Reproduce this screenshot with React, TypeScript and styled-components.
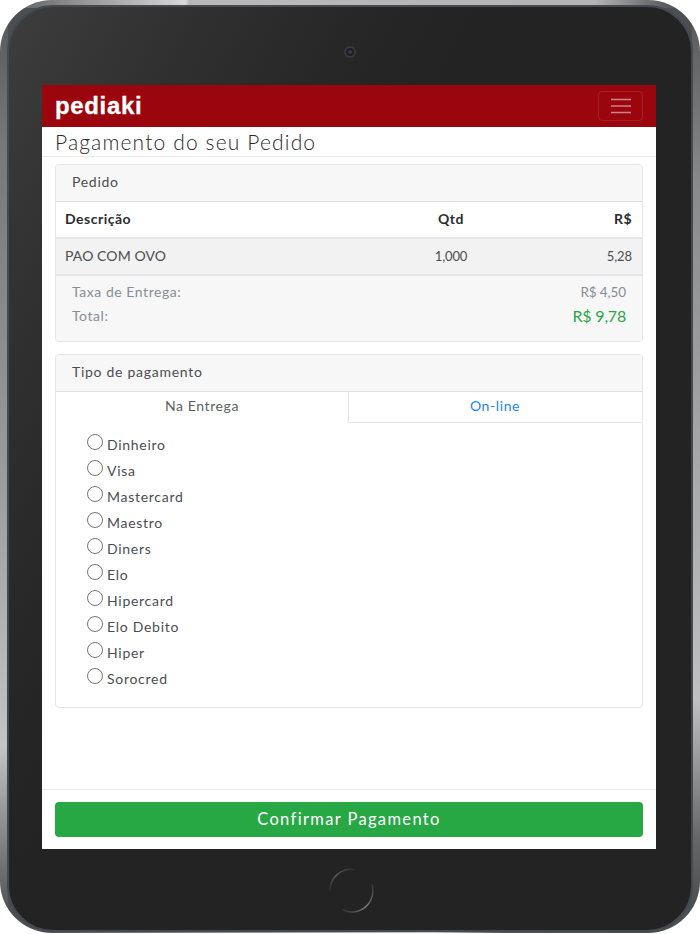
import React from "react";
import styled, { createGlobalStyle } from "styled-components";

const Global = createGlobalStyle`
  html, body { margin: 0; padding: 0; background: #fff; }
  * { box-sizing: border-box; }
  body { font-family: "Lato", "Open Sans", sans-serif; color: #212529; }
`;

const Device = styled.div`
  width: 700px;
  height: 933px;
  padding: 5px 7px 1px 7px;
  border-radius: 52px;
  background:
    linear-gradient(90deg, #555 0%, #8c8c8c 10%, #d8d8d8 26.5%, #b8b8b8 27%, #b4b4b4 85%, #5a5c5e 95%, #454749 100%) top / 100% 8px no-repeat,
    linear-gradient(90deg, #444 0%, #6a6a6a 15%, #c8c8c8 62%, #555 72%, #4a4c4f 100%) bottom / 100% 10px no-repeat,
    linear-gradient(180deg, #555 0%, #777 15%, #9a9a9a 50%, #c4c4c4 80%, #777 92%, #444 100%) left / 8px 100% no-repeat,
    linear-gradient(180deg, #555 0%, #8a8a8a 20%, #a8a8a8 50%, #c0c0c0 75%, #666 90%, #444 100%) right / 8px 100% no-repeat,
    #4c4f52;
`;

const Bezel = styled.div`
  height: 100%;
  display: grid;
  grid-template-rows: 78px 764px 1fr;
  padding: 0 35px 0 33px;
  border: 2px solid #454a52;
  border-radius: 46px;
  background: linear-gradient(118deg, #3d3d3d 0%, #303030 16%, #272727 30%, #232323 40%, #232323 100%);
`;

const TopBezel = styled.div`
  display: flex;
  justify-content: center;
  padding-top: 39px;
  padding-left: 2px;
`;

const Camera = styled.span`
  width: 12px;
  height: 12px;
  border-radius: 50%;
  background: #1f1f22;
  border: 2px solid #3a3a3e;
  display: flex;
  align-items: center;
  justify-content: center;
  &::after {
    content: "";
    width: 4px;
    height: 4px;
    border-radius: 50%;
    background: #3a3450;
  }
`;

const BottomBezel = styled.div`
  display: flex;
  justify-content: center;
  padding-top: 18px;
  padding-left: 3px;
`;

const HomeIcon = styled.svg`
  width: 46px;
  height: 46px;
  display: block;
`;

const Screen = styled.main`
  background: #fff;
  display: flex;
  flex-direction: column;
  min-height: 0;
`;

const Navbar = styled.nav`
  height: 42px;
  flex: none;
  background: #9b050e;
  display: flex;
  align-items: center;
  justify-content: space-between;
  padding: 0 13px;
`;

const Brand = styled.span`
  font-family: "Liberation Sans", Arial, sans-serif;
  font-weight: 700;
  font-size: 24px;
  letter-spacing: 0.65px;
  color: #fff;
  -webkit-text-stroke: 0.3px #fff;
`;

const Toggler = styled.button`
  width: 45px;
  height: 30px;
  padding: 0;
  background: transparent;
  border: 1px solid rgba(255, 255, 255, 0.1);
  border-radius: 4px;
  display: flex;
  align-items: center;
  justify-content: center;
`;

const TitleRow = styled.header`
  height: 30px;
  flex: none;
  border-bottom: 1px solid #e9e9e9;
  padding: 0 13px 1px;
  display: flex;
  align-items: center;
`;

const Title = styled.h1`
  margin: 0;
  font-size: 21px;
  line-height: 29px;
  font-weight: 300;
  letter-spacing: 1.15px;
  color: #26292d;
`;

const Content = styled.div`
  flex: 1;
  padding: 7px 13px 0;
  display: flex;
  flex-direction: column;
  gap: 12px;
  min-height: 0;
`;

const Card = styled.section<{ $h: number }>`
  height: ${(p) => p.$h}px;
  border: 1px solid #e5e5e5;
  border-radius: 4px;
  display: flex;
  flex-direction: column;
  overflow: hidden;
`;

const CardHeader = styled.div`
  height: 37px;
  flex: none;
  padding: 0 16px 4px;
  background: #f7f7f7;
  border-bottom: 1px solid #dfdfdf;
  display: flex;
  align-items: center;
  font-size: 14px;
  letter-spacing: 0.72px;
  color: #4a4e52;
`;

const TableRow = styled.div<{ $shaded?: boolean; $head?: boolean }>`
  height: 37px;
  flex: none;
  display: grid;
  grid-template-columns: 1fr 100px 131px;
  align-items: center;
  padding: 0 10px 2px 9px;
  background: ${(p) => (p.$shaded ? "#f2f2f2" : "#fff")};
  border-bottom: 2px solid #e4e6e9;
  font-size: 14px;
  font-weight: ${(p) => (p.$head ? 700 : 400)};
  color: ${(p) => (p.$head ? "#2a2d30" : "#4a4e52")};
  letter-spacing: ${(p) => (p.$head ? "0.5px" : "0.1px")};
`;

const QtyCell = styled.span`
  text-align: center;
`;

const PriceCell = styled.span`
  text-align: right;
`;

const Figure = styled.span`
  font-size: 13px;
  letter-spacing: -0.1px;
`;

const Totals = styled.div`
  flex: 1;
  background: #f7f7f7;
  padding: 5px 16px 0;
`;

const TotalRow = styled.div`
  height: 24px;
  display: flex;
  align-items: center;
  justify-content: space-between;
  padding-bottom: 3px;
  font-size: 14px;
  letter-spacing: 0.55px;
  color: #868e96;
`;

const Price = styled.span`
  font-size: 13.5px;
  letter-spacing: -0.1px;
`;

const GrandTotal = styled.span`
  font-size: 16px;
  color: #28a745;
  letter-spacing: -0.2px;
`;

const Tabs = styled.div`
  height: 31px;
  flex: none;
  display: grid;
  grid-template-columns: 1fr 1fr;
`;

const Tab = styled.div<{ $active?: boolean }>`
  display: flex;
  align-items: center;
  justify-content: center;
  font-size: 14px;
  letter-spacing: 0.6px;
  padding-bottom: 3px;
  color: ${(p) => (p.$active ? "#5a5f64" : "#2583f2")};
  border-right: 1px solid ${(p) => (p.$active ? "#e3e3e3" : "transparent")};
  border-bottom: 1px solid ${(p) => (p.$active ? "#fff" : "#e3e3e3")};
`;

const RadioList = styled.div`
  padding: 11px 0 0 31px;
  display: flex;
  flex-direction: column;
`;

const RadioRow = styled.label`
  height: 26px;
  display: flex;
  align-items: flex-start;
  gap: 4px;
  font-size: 14px;
  letter-spacing: 0.72px;
  color: #4a4e52;
`;

const Radio = styled.input`
  appearance: none;
  margin: 0;
  width: 16px;
  height: 16px;
  flex: none;
  border: 1px solid #777;
  border-radius: 50%;
  background: #fff;
`;

const RadioText = styled.span`
  line-height: 17px;
  padding-top: 2px;
`;

const Footer = styled.footer`
  height: 60px;
  flex: none;
  border-top: 1px solid #e9e9e9;
  padding: 12px 13px 0;
`;

const Confirm = styled.button`
  width: 100%;
  height: 35px;
  padding: 0 0 2px;
  border: none;
  border-radius: 4px;
  background: #28a745;
  color: #fff;
  font-family: inherit;
  font-size: 16.5px;
  letter-spacing: 1.35px;
`;

const methods = ["Dinheiro", "Visa", "Mastercard", "Maestro", "Diners", "Elo", "Hipercard", "Elo Debito", "Hiper", "Sorocred"];

export default function App() {
  return (
    <>
      <Global />
      <Device>
        <Bezel>
          <TopBezel>
            <Camera />
          </TopBezel>
          <Screen>
            <Navbar>
              <Brand>pediaki</Brand>
              <Toggler aria-label="Menu">
                <svg width="20" height="16" viewBox="0 0 20 16" fill="none" stroke="rgba(255,255,255,0.5)" strokeWidth="1.6">
                  <path d="M0 1.5h20M0 8h20M0 14.5h20" />
                </svg>
              </Toggler>
            </Navbar>
            <TitleRow>
              <Title>Pagamento do seu Pedido</Title>
            </TitleRow>
            <Content>
              <Card $h={178}>
                <CardHeader>Pedido</CardHeader>
                <TableRow $head>
                  <span>Descrição</span>
                  <QtyCell>Qtd</QtyCell>
                  <PriceCell>R$</PriceCell>
                </TableRow>
                <TableRow $shaded>
                  <span>PAO COM OVO</span>
                  <QtyCell><Figure>1,000</Figure></QtyCell>
                  <PriceCell><Figure>5,28</Figure></PriceCell>
                </TableRow>
                <Totals>
                  <TotalRow>
                    <span>Taxa de Entrega:</span>
                    <Price>R$ 4,50</Price>
                  </TotalRow>
                  <TotalRow>
                    <span>Total:</span>
                    <GrandTotal>R$ 9,78</GrandTotal>
                  </TotalRow>
                </Totals>
              </Card>
              <Card $h={354}>
                <CardHeader>Tipo de pagamento</CardHeader>
                <Tabs>
                  <Tab $active>Na Entrega</Tab>
                  <Tab>On-line</Tab>
                </Tabs>
                <RadioList>
                  {methods.map((m) => (
                    <RadioRow key={m}>
                      <Radio type="radio" name="pagamento" />
                      <RadioText>{m}</RadioText>
                    </RadioRow>
                  ))}
                </RadioList>
              </Card>
            </Content>
            <Footer>
              <Confirm>Confirmar Pagamento</Confirm>
            </Footer>
          </Screen>
          <BottomBezel>
            <HomeIcon viewBox="0 0 46 46" fill="none" strokeLinecap="round">
              <defs>
                <linearGradient id="homeTop" x1="0" y1="1" x2="1" y2="0">
                  <stop offset="0" stopColor="#2a2a2a" />
                  <stop offset="0.5" stopColor="#5c5c5c" />
                  <stop offset="1" stopColor="#2d2d2d" />
                </linearGradient>
                <linearGradient id="homeBottom" x1="1" y1="0" x2="0" y2="1">
                  <stop offset="0" stopColor="#3a3a3a" />
                  <stop offset="0.5" stopColor="#808080" />
                  <stop offset="1" stopColor="#2e2e2e" />
                </linearGradient>
              </defs>
              <path d="M2 24A21 21 0 0 1 26 2.5" stroke="url(#homeTop)" strokeWidth="1.4" />
              <path d="M44 18A21 21 0 0 1 15 43" stroke="url(#homeBottom)" strokeWidth="1.4" />
            </HomeIcon>
          </BottomBezel>
        </Bezel>
      </Device>
    </>
  );
}
